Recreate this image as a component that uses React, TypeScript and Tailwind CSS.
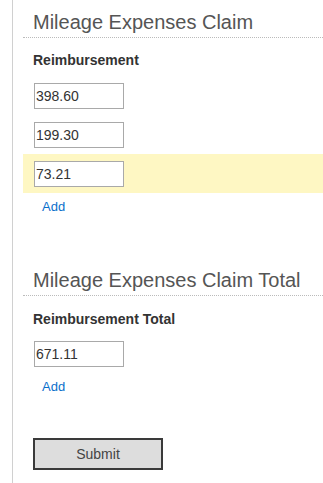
import React from "react";

const font = { fontFamily: '"Liberation Sans", Arial, sans-serif' };

interface Row {
  value: string;
  highlighted?: boolean;
}

function SectionHeading({ title }: { title: string }) {
  return (
    <h2 className="pl-[10px] pb-[3px] text-[20px] leading-[24px] font-normal text-[#555] border-b border-dotted border-[#bbb]">
      {title}
    </h2>
  );
}

function AmountRow({ row }: { row: Row }) {
  return (
    <div className={`pl-[11px] pt-[7px] pb-[6px] ${row.highlighted ? "bg-[#fef7c3]" : ""}`}>
      <input
        type="text"
        defaultValue={row.value}
        className="block w-[90px] h-[26px] border border-[#a9a9a9] bg-white px-px text-[14px] text-[#333] outline-none"
        style={font}
      />
    </div>
  );
}

function AddLink() {
  return (
    <a href="#" className="block ml-[19px] mt-[6px] w-fit text-[13px] leading-[15px] text-[#0a6fcb]">
      Add
    </a>
  );
}

export default function App() {
  const claims: Row[] = [
    { value: "398.60" },
    { value: "199.30" },
    { value: "73.21", highlighted: true },
  ];

  return (
    <div className="min-h-[483px] bg-white" style={font}>
      <div className="ml-3 min-h-[483px] border-l border-[#d0d0d0] pl-[10px] pt-[10px]">
        <section>
          <SectionHeading title="Mileage Expenses Claim" />
          <div className="pl-[10px] mt-[14px] text-[14px] leading-[16px] font-bold text-[#333]">Reimbursement</div>
          <div className="mt-[8px]">
            {claims.map((row, idx) => (
              <AmountRow key={idx} row={row} />
            ))}
          </div>
          <AddLink />
        </section>

        <section className="mt-[54px]">
          <SectionHeading title="Mileage Expenses Claim Total" />
          <div className="pl-[10px] mt-[15px] text-[14px] leading-[16px] font-bold text-[#333]">Reimbursement Total</div>
          <div className="mt-[7px]">
            <AmountRow row={{ value: "671.11" }} />
          </div>
          <AddLink />
        </section>

        <div className="pl-[10px] mt-[44px]">
          <button
            type="button"
            className="w-[130px] h-[32px] border-2 border-[#3a3a3a] bg-[#dddddd] text-[14px] text-[#444]"
            style={font}
          >
            Submit
          </button>
        </div>
      </div>
    </div>
  );
}
